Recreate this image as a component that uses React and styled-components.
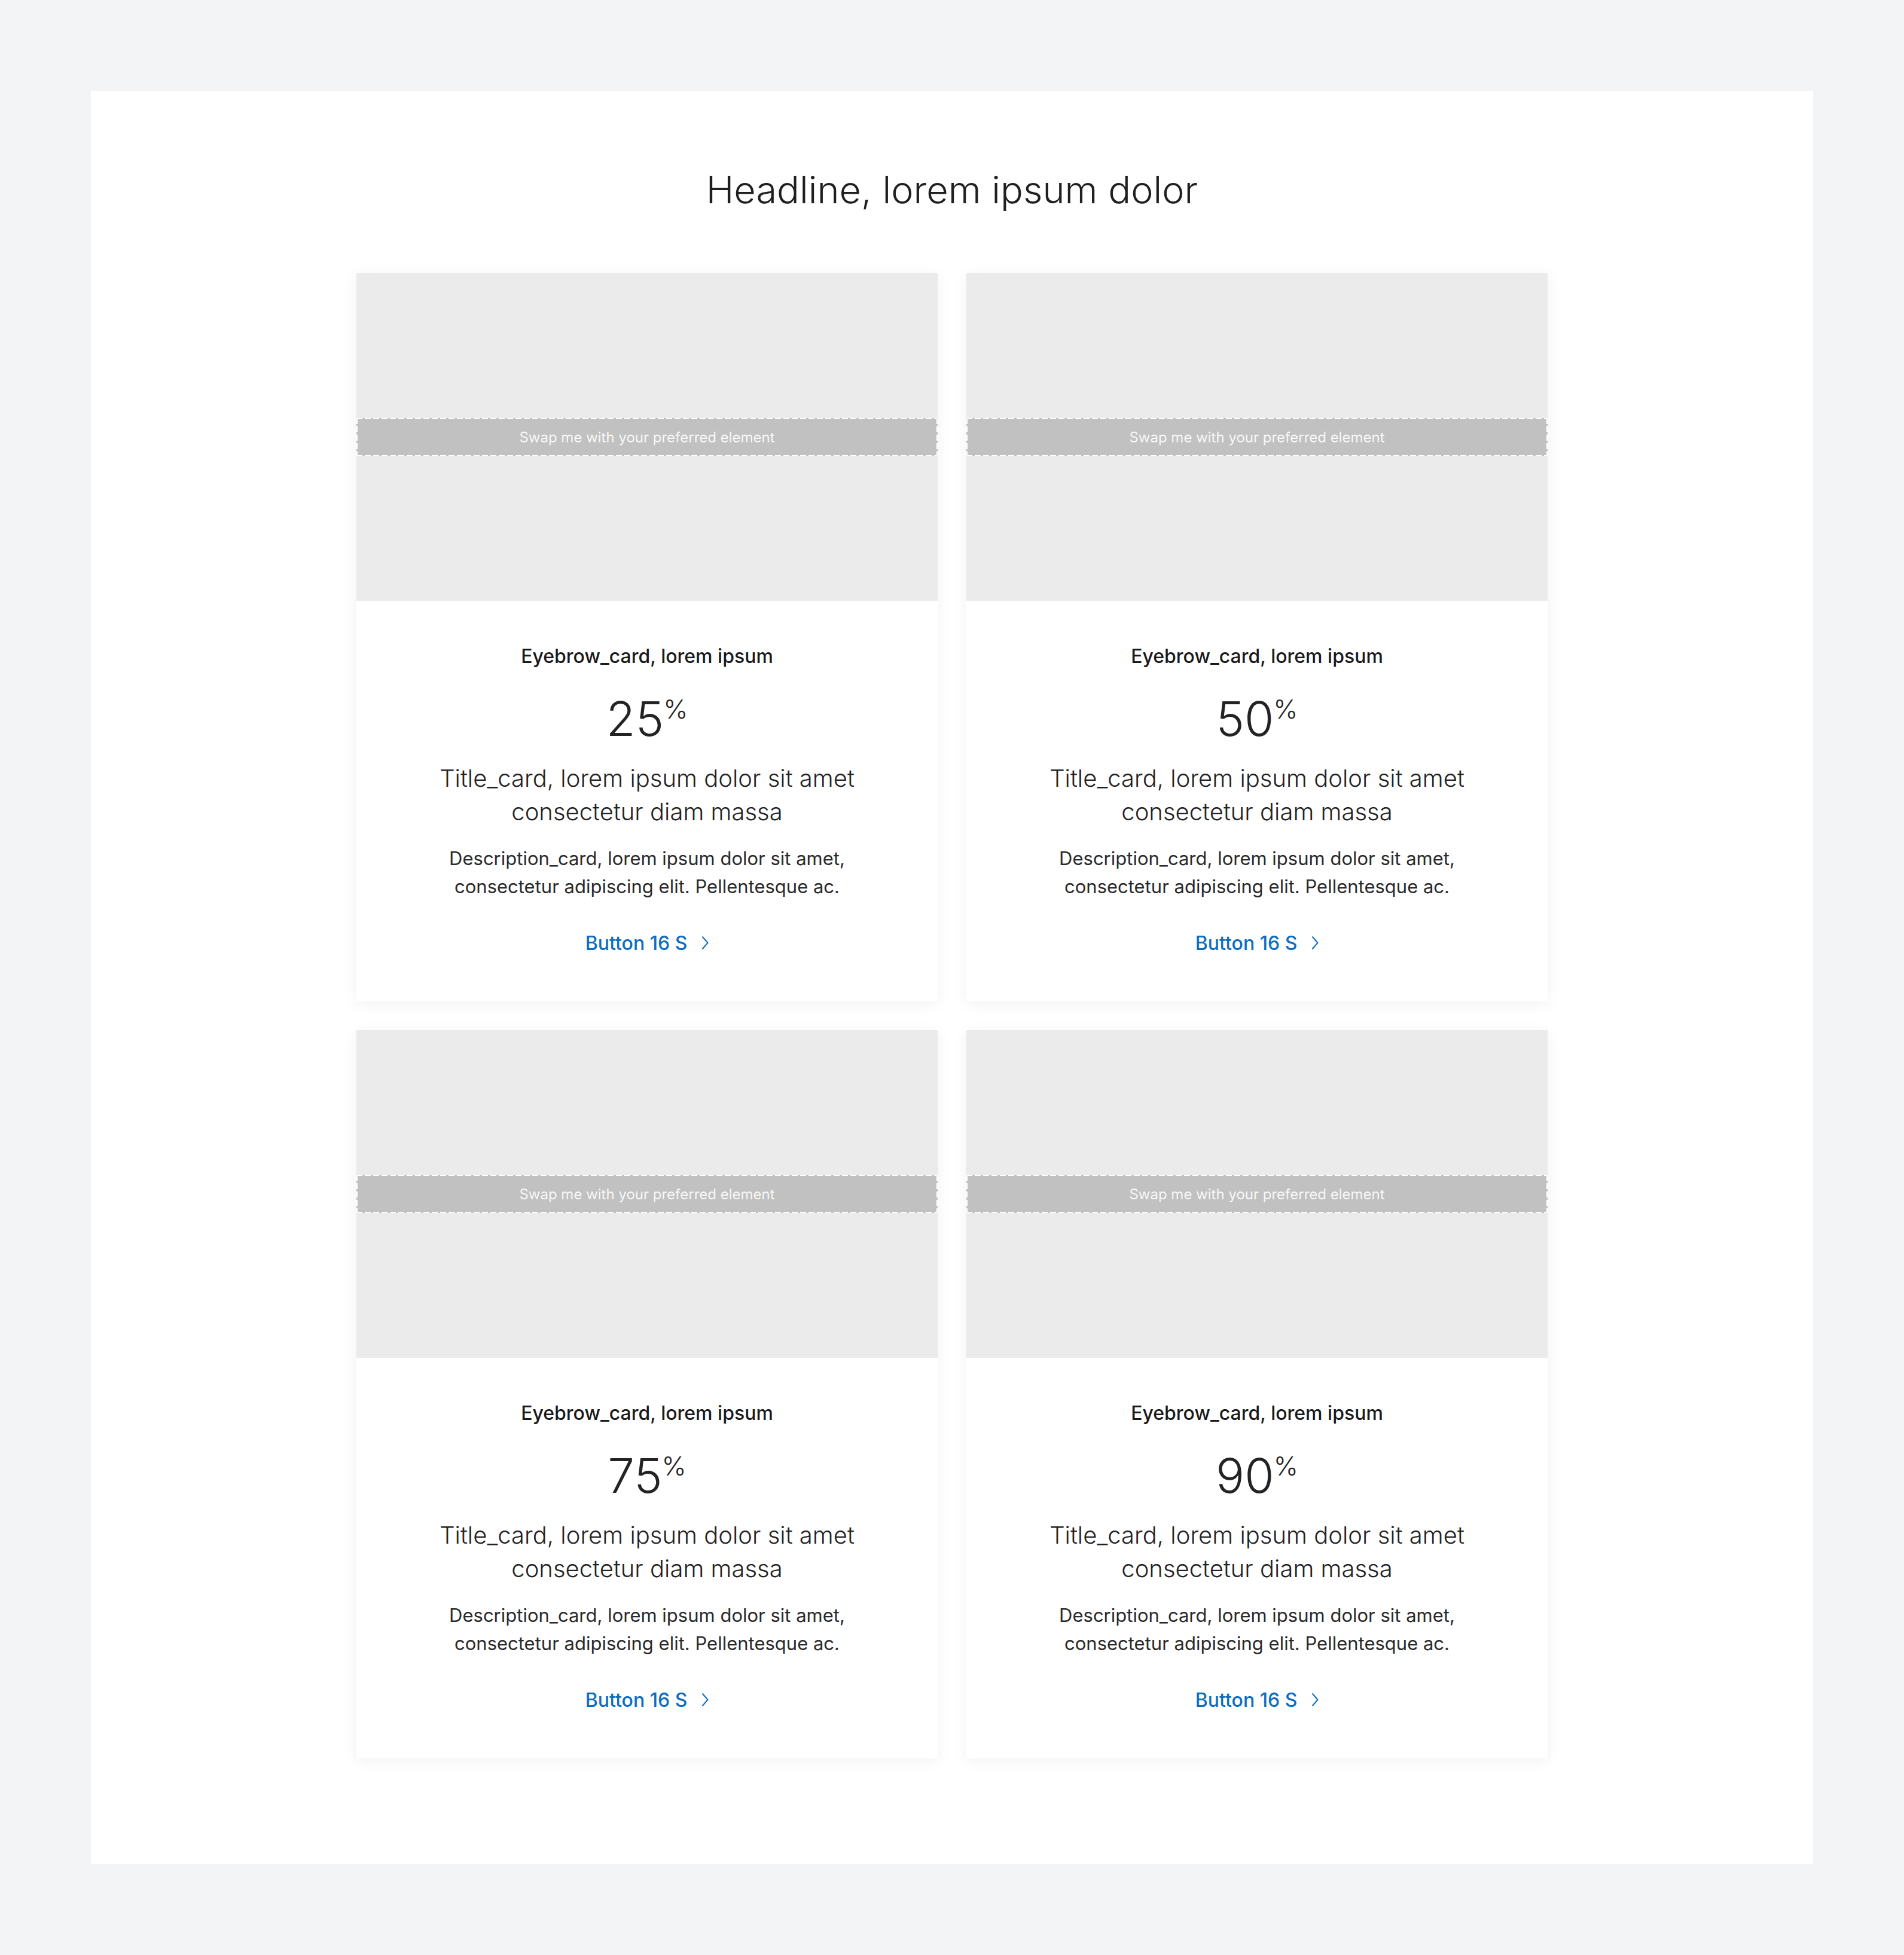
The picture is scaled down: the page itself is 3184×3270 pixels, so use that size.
import React from "react";
import styled, { createGlobalStyle } from "styled-components";

const GlobalStyle = createGlobalStyle`
	body {
		margin: 0;
		background: #f3f4f6;
		font-family: Inter, Roboto, "Liberation Sans", Arial, sans-serif;
		color: #232323;
	}
`;

const cards = [
	{ id: 1, value: 25 },
	{ id: 2, value: 50 },
	{ id: 3, value: 75 },
	{ id: 4, value: 90 },
];

function App() {
	return (
		<>
			<GlobalStyle />
			<Page>
				<Panel>
					<Headline>Headline, lorem ipsum dolor</Headline>
					<Grid>
						{cards.map((card) => (
							<Card key={card.id}>
								<Media>
									<Placeholder>Swap me with your preferred element</Placeholder>
								</Media>
								<Body>
									<Eyebrow>Eyebrow_card, lorem ipsum</Eyebrow>
									<Stat>
										<Value>{card.value}</Value>
										<Unit>%</Unit>
									</Stat>
									<Title>
										Title_card, lorem ipsum dolor sit amet
										<br />
										consectetur diam massa
									</Title>
									<Description>
										Description_card, lorem ipsum dolor sit amet,
										<br />
										consectetur adipiscing elit. Pellentesque ac.
									</Description>
									<LinkButton href="#">
										Button 16 S
										<svg width="12" height="24" viewBox="0 0 12 24" fill="none">
											<path d="M1.5 1.5 L10.5 12 L1.5 22.5" stroke="currentColor" strokeWidth="2" />
										</svg>
									</LinkButton>
								</Body>
							</Card>
						))}
					</Grid>
				</Panel>
			</Page>
		</>
	);
}

const Page = styled.div`
	padding: 152px;
`;

const Panel = styled.section`
	background: #ffffff;
	padding: 125px 0 177px;
	display: flex;
	flex-direction: column;
	align-items: center;
`;

const Headline = styled.h1`
	margin: 0 0 100px;
	font-size: 63px;
	line-height: 80px;
	font-weight: 300;
	color: #1f1f1f;
`;

const Grid = styled.div`
	display: grid;
	grid-template-columns: repeat(2, 972px);
	gap: 48px;
`;

const Card = styled.article`
	background: #ffffff;
	box-shadow: 0 4px 24px rgba(0, 0, 0, 0.06);
	display: flex;
	flex-direction: column;
`;

const Media = styled.div`
	height: 548px;
	background: #ebebeb;
	display: flex;
	align-items: center;
`;

const dash = "#ffffff 0 10px, transparent 10px 14px";

const Placeholder = styled.div`
	flex: 1;
	height: 64px;
	border-radius: 4px;
	background:
		repeating-linear-gradient(90deg, ${dash}) top left / 100% 2px no-repeat,
		repeating-linear-gradient(90deg, ${dash}) bottom left / 100% 2px no-repeat,
		repeating-linear-gradient(180deg, ${dash}) top left / 2px 100% no-repeat,
		repeating-linear-gradient(180deg, ${dash}) top right / 2px 100% no-repeat,
		#c1c1c1;
	display: flex;
	align-items: center;
	justify-content: center;
	color: #f7f7f7;
	font-size: 24px;
	font-weight: 400;
`;

const Body = styled.div`
	padding: 73px 40px 78px;
	display: flex;
	flex-direction: column;
	align-items: center;
	text-align: center;
`;

const Eyebrow = styled.div`
	font-size: 32px;
	line-height: 40px;
	font-weight: 500;
	color: #1a1a1a;
`;

const Stat = styled.div`
	margin-top: 36px;
	display: flex;
	align-items: flex-start;
`;

const Value = styled.span`
	font-size: 80px;
	line-height: 96px;
	font-weight: 300;
`;

const Unit = styled.span`
	margin: 10px 0 0 -1px;
	font-size: 44px;
	line-height: 44px;
	font-weight: 300;
`;

const Title = styled.h3`
	margin: 24px 0 0;
	font-size: 40px;
	line-height: 56px;
	font-weight: 300;
`;

const Description = styled.p`
	margin: 26px 0 0;
	font-size: 31px;
	line-height: 47px;
	font-weight: 400;
	color: #2a2a2a;
`;

const LinkButton = styled.a`
	margin-top: 51px;
	display: flex;
	align-items: center;
	gap: 24px;
	height: 40px;
	font-size: 32px;
	font-weight: 500;
	color: #0d6ebf;
	text-decoration: none;
`;

export default App;
